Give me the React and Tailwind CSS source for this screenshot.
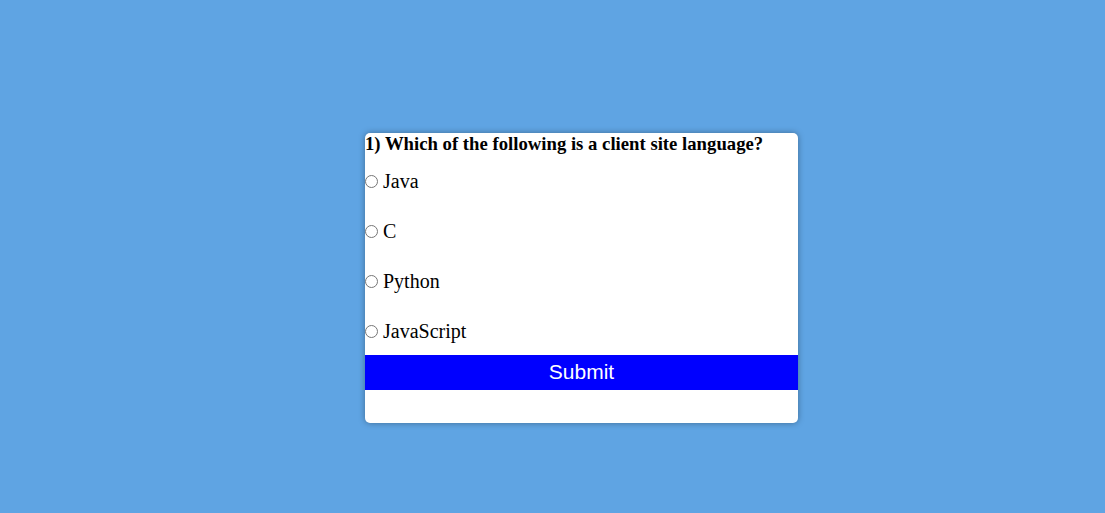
import React, { useState } from 'react';

const options = ['Java', 'C', 'Python', 'JavaScript'];

function App() {
  const [answer, setAnswer] = useState('');
  return (
    <div className="min-h-[513px] w-full bg-[#5fa4e3] flex items-center justify-center pl-[58px] pt-[43px]">
      <div className="w-[433px] h-[290px] bg-white rounded-[5px] shadow-[0_0_6px_rgba(0,0,0,0.35)] overflow-hidden flex flex-col">
        <h3 className="font-['Liberation_Serif',serif] font-bold text-[18.72px] leading-[21px] text-black m-0 whitespace-nowrap">
          1) Which of the following is a client site language?
        </h3>
        <div className="flex flex-col pt-[2px]">
          {options.map((opt) => (
            <label key={opt} className="h-[50px] flex items-center font-['Liberation_Serif',serif] text-[20px] text-black">
              <input
                type="radio"
                name="quiz"
                value={opt}
                checked={answer === opt}
                onChange={() => setAnswer(opt)}
                className="m-0 w-[13px] h-[13px] mr-[5px]"
              />
              {opt}
            </label>
          ))}
        </div>
        <button className="h-[35px] w-full bg-[#0000ff] text-white font-['Liberation_Sans',sans-serif] text-[21px] -mt-[1px] leading-[31px] pb-[2px]">
          Submit
        </button>
      </div>
    </div>
  );
}

export default App;
